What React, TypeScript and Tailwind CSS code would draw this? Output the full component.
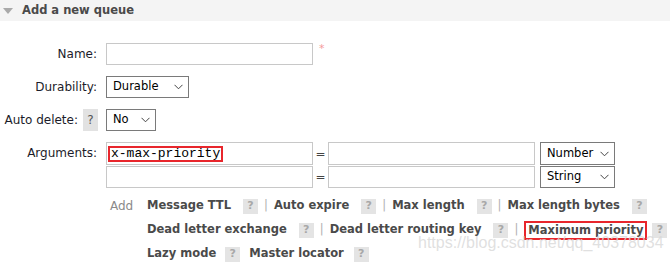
import React from "react";

const sans = "font-['DejaVu_Sans',Verdana,sans-serif]";

function Help({ dark }: { dark?: boolean }) {
  return (
    <span
      className={`inline-flex items-center justify-center w-[15px] h-[15px] bg-[#e4e4e4] text-[11px] ${
        dark ? "text-[#555]" : "text-[#a8a8a8]"
      }`}
    >
      ?
    </span>
  );
}

function Chevron() {
  return (
    <svg width="9" height="6" viewBox="0 0 9 6" className="shrink-0">
      <path d="M0.5 0.8 L4.5 4.8 L8.5 0.8" fill="none" stroke="#444" strokeWidth="1" />
    </svg>
  );
}

function FakeSelect({ value, width }: { value: string; width: string }) {
  return (
    <div
      className={`${width} h-full flex items-center justify-between border border-[#7a7a7a] bg-white pl-[6px] pr-[5px] text-[11.5px] text-black`}
    >
      <span>{value}</span>
      <Chevron />
    </div>
  );
}

function Sep() {
  return <span className="px-[6px] text-[#b0b0b0] font-normal">|</span>;
}

function Opt({ label, boxed }: { label: string; boxed?: boolean }) {
  return (
    <span className="inline-flex items-center">
      {boxed ? (
        <span className="border-2 border-[#e8262c] px-[2px] leading-[15px]">{label}</span>
      ) : (
        <span>{label}</span>
      )}
      <span className={boxed ? "ml-[5px]" : "ml-[12px]"}>
        <Help />
      </span>
    </span>
  );
}

export default function App() {
  return (
    <div className={`relative w-[670px] h-[263px] overflow-hidden bg-white ${sans} text-[12px] text-[#1c1c2a]`}>
      <div className="h-[21px] bg-[#f4f4f4] flex items-center pl-[3px]">
        <svg width="10" height="6" viewBox="0 0 10 6">
          <path d="M0 0 H10 L5 6 Z" fill="#a9a9a9" />
        </svg>
        <span className="ml-[9px] font-bold text-[11.5px] text-[#4a4a4a]">Add a new queue</span>
      </div>

      <div className="pt-[22px] flex flex-col gap-[11px]">
        <div className="flex items-center h-[22px]">
          <div className="w-[97px] text-right">Name:</div>
          <div className="ml-[9px] w-[207px] h-full border border-[#c8c8c8]" />
          <span className="ml-[6px] self-start -mt-[2px] text-[#f59a9a] text-[11px]">*</span>
        </div>

        <div className="flex items-center h-[22px]">
          <div className="w-[97px] text-right">Durability:</div>
          <div className="ml-[9px] h-full">
            <FakeSelect value="Durable" width="w-[83px]" />
          </div>
        </div>

        <div className="flex items-center h-[22px]">
          <div className="w-[98px] flex items-center justify-end gap-[5px]">
            <span>Auto delete:</span>
            <span className="w-[15px] h-[22px] bg-[#e2e2e2] text-[#555] flex items-center justify-center">?</span>
          </div>
          <div className="ml-[8px] h-full">
            <FakeSelect value="No" width="w-[50px]" />
          </div>
        </div>

        <div className="flex">
          <div className="w-[97px] text-right h-[23px] leading-[23px]">Arguments:</div>
          <div className="ml-[9px] flex flex-col gap-[1px]">
            <div className="flex items-center h-[23px]">
              <div className="w-[207px] h-full border border-[#c8c8c8] flex items-center pl-[1px]">
                <span className="border-[2.5px] border-[#e8262c] bg-white px-[1px] leading-[12px] font-['Liberation_Mono',monospace] text-[13px] text-black">
                  x-max-priority
                </span>
              </div>
              <span className="w-[15px] text-center text-[#444]">=</span>
              <div className="w-[207px] h-full border border-[#c8c8c8]" />
              <div className="ml-[5px] h-full">
                <FakeSelect value="Number" width="w-[75px]" />
              </div>
            </div>
            <div className="flex items-center h-[22px]">
              <div className="w-[207px] h-full border border-[#c8c8c8]" />
              <span className="w-[15px] text-center text-[#444]">=</span>
              <div className="w-[207px] h-full border border-[#c8c8c8]" />
              <div className="ml-[5px] h-full">
                <FakeSelect value="String" width="w-[75px]" />
              </div>
            </div>
          </div>
        </div>
      </div>

      <div className="flex mt-[6px]">
        <div className="w-[147px] pl-[110px] text-[#8a8a8a] pt-[3px] text-[12px]">Add</div>
        <div className="flex flex-col font-bold text-[11.5px] text-[#4a4a4a]">
          <div className="flex items-center h-[24px]">
            <Opt label="Message TTL" />
            <Sep />
            <Opt label="Auto expire" />
            <Sep />
            <Opt label="Max length" />
            <Sep />
            <Opt label="Max length bytes" />
          </div>
          <div className="flex items-center h-[24px]">
            <Opt label="Dead letter exchange" />
            <Sep />
            <Opt label="Dead letter routing key" />
            <Sep />
            <Opt label="Maximum priority" boxed />
          </div>
          <div className="flex items-center h-[24px] gap-[9px]">
            <span className="inline-flex items-center gap-[9px]">
              <span>Lazy mode</span>
              <Help />
            </span>
            <span className="inline-flex items-center gap-[10px]">
              <span>Master locator</span>
              <Help />
            </span>
          </div>
        </div>
      </div>

      <div className="absolute left-[418px] top-[235px] font-['Liberation_Sans',Arial,sans-serif] text-[16px] leading-[16px] text-[#d8d8d8]/80 pointer-events-none">
        https://blog.csdn.net/qq_40378034
      </div>
    </div>
  );
}
